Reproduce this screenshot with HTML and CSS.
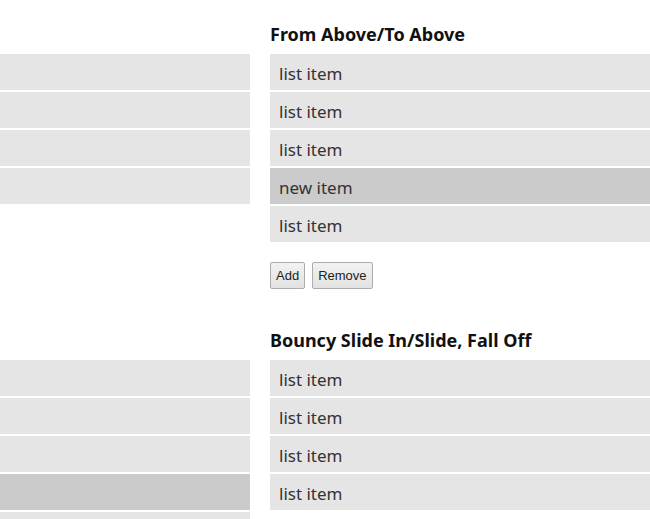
FILE: index.html
```html
<!DOCTYPE html>
<html>
<head>
<meta charset="utf-8">
<link rel="stylesheet" href="styles.css">
</head>
<body>
<div class="page">
  <section class="demo">
    <div class="col col-left">
      <div class="spacer"></div>
      <ul class="list">
        <li class="item"></li>
        <li class="item"></li>
        <li class="item"></li>
        <li class="item"></li>
      </ul>
    </div>
    <div class="col col-right">
      <h2 class="title">From Above/To Above</h2>
      <ul class="list">
        <li class="item">list item</li>
        <li class="item">list item</li>
        <li class="item">list item</li>
        <li class="item item-new">new item</li>
        <li class="item">list item</li>
      </ul>
      <div class="controls">
        <button class="btn">Add</button>
        <button class="btn">Remove</button>
      </div>
    </div>
  </section>
  <section class="demo demo-second">
    <div class="col col-left">
      <div class="spacer"></div>
      <ul class="list">
        <li class="item"></li>
        <li class="item"></li>
        <li class="item"></li>
        <li class="item item-new"></li>
        <li class="item"></li>
      </ul>
    </div>
    <div class="col col-right">
      <h2 class="title">Bouncy Slide In/Slide, Fall Off</h2>
      <ul class="list">
        <li class="item">list item</li>
        <li class="item">list item</li>
        <li class="item">list item</li>
        <li class="item">list item</li>
      </ul>
    </div>
  </section>
</div>
</body>
</html>
```
FILE: styles.css
```css
html, body {
  margin: 0;
  padding: 0;
  background: #fff;
  overflow: hidden;
}
body {
  font-family: "Noto Sans", "Open Sans", sans-serif;
  color: #333;
}
.page {
  width: 650px;
  height: 519px;
  overflow: hidden;
}
.demo {
  display: flex;
  gap: 20px;
  padding-top: 20px;
}
.demo-second {
  padding-top: 37px;
}
.col-left {
  flex: 0 0 250px;
}
.col-right {
  flex: 0 0 380px;
}
.spacer {
  height: 34px;
}
.title {
  margin: 0;
  height: 34px;
  font-size: 18px;
  line-height: 28px;
  font-weight: bold;
  color: #111;
}
.list {
  list-style: none;
  margin: 0;
  padding: 0;
  display: flex;
  flex-direction: column;
  gap: 2px;
}
.item {
  height: 34px;
  padding-top: 2px;
  line-height: 36px;
  padding-left: 9px;
  background: #e5e5e5;
  font-size: 17px;
  color: #333;
}
.item-new {
  background: #cbcbcb;
}
.controls {
  margin-top: 20px;
  display: flex;
  gap: 7px;
}
.btn {
  height: 27px;
  padding: 0 5px;
  font-family: "Liberation Sans", Arial, sans-serif;
  font-size: 13px;
  color: #222;
  border: 1px solid #acacac;
  border-radius: 2px;
  background: linear-gradient(#f2f2f2, #e2e2e2);
}
```
